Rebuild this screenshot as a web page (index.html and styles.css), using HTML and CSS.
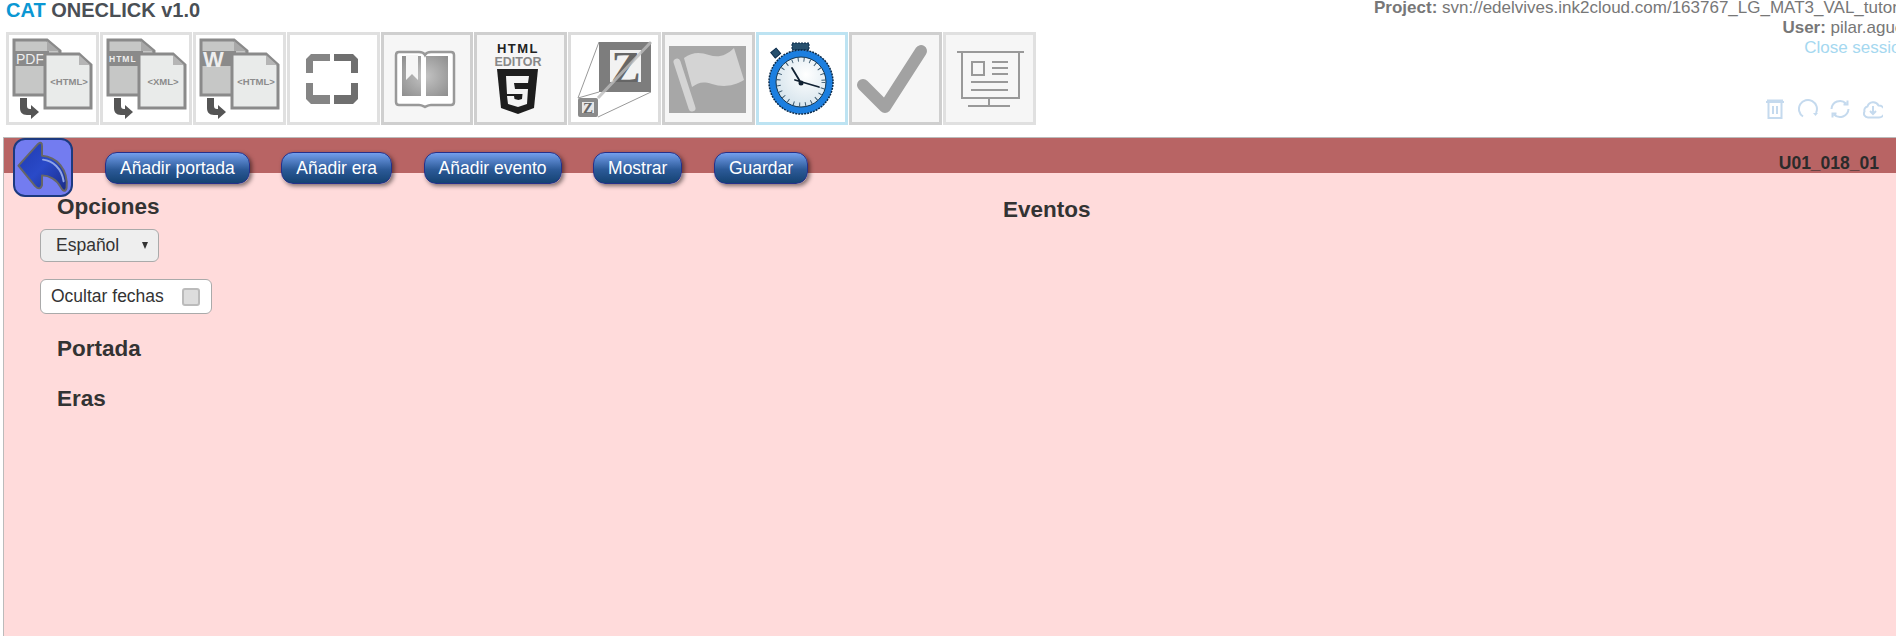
FILE: index.html
```html
<!DOCTYPE html>
<html>
<head>
    <meta charset="utf-8">
    <title>CAT OneClick</title>
    <link rel="stylesheet" href="styles.css">
</head>
<body>
    <!-- Header -->
    <div class="header">
        <div class="header-left">
            <h1 class="app-title"><span class="app-cat">CAT</span> ONECLICK v1.0</h1>
            <div class="toolbar">
                <div class="tile">
                    <svg viewBox="0 0 86 87" class="tile-icon">
                        <path d="M5 5h33l13 11v44H5z" fill="#c6c7c6" stroke="#8a8a8a" stroke-width="3"/>
                        <path d="M38 6v10h12z" fill="#a9a9a9"/>
                        <rect x="4" y="16" width="36" height="15" fill="#8a8a8a"/>
                        <text x="7" y="29" class="doc-label" font-size="14">PDF</text>
                        <path d="M36 19h34l12 11v43H36z" fill="#e9ebea" stroke="#8a8a8a" stroke-width="3"/>
                        <path d="M70 20v10h11z" fill="#b5b5b5"/>
                        <text x="60" y="50" class="doc-tag" font-size="9.500" text-anchor="middle">&lt;HTML&gt;</text>
                        <path d="M11 63h7v8c0 2 1 3 3 3h1v-4l8 7-8 7v-4h-4c-5 0-7-3-7-7z" fill="#555"/>
                    </svg>
                </div>
                <div class="tile">
                    <svg viewBox="0 0 86 87" class="tile-icon">
                        <path d="M5 5h33l13 11v44H5z" fill="#c6c7c6" stroke="#8a8a8a" stroke-width="3"/>
                        <path d="M38 6v10h12z" fill="#a9a9a9"/>
                        <rect x="4" y="16" width="36" height="15" fill="#8a8a8a"/>
                        <text x="6" y="27" class="doc-label" font-size="8.500" font-weight="700" letter-spacing="1">HTML</text>
                        <path d="M36 19h34l12 11v43H36z" fill="#e9ebea" stroke="#8a8a8a" stroke-width="3"/>
                        <path d="M70 20v10h11z" fill="#b5b5b5"/>
                        <text x="60" y="50" class="doc-tag" font-size="9.500" text-anchor="middle">&lt;XML&gt;</text>
                        <path d="M11 63h7v8c0 2 1 3 3 3h1v-4l8 7-8 7v-4h-4c-5 0-7-3-7-7z" fill="#555"/>
                    </svg>
                </div>
                <div class="tile">
                    <svg viewBox="0 0 86 87" class="tile-icon">
                        <path d="M5 5h33l13 11v44H5z" fill="#c6c7c6" stroke="#8a8a8a" stroke-width="3"/>
                        <path d="M38 6v10h12z" fill="#a9a9a9"/>
                        <rect x="4" y="16" width="36" height="15" fill="#8a8a8a"/>
                        <text x="7" y="32" class="doc-label" font-size="22" font-weight="700">W</text>
                        <path d="M36 19h34l12 11v43H36z" fill="#e9ebea" stroke="#8a8a8a" stroke-width="3"/>
                        <path d="M70 20v10h11z" fill="#b5b5b5"/>
                        <text x="60" y="50" class="doc-tag" font-size="9.500" text-anchor="middle">&lt;HTML&gt;</text>
                        <path d="M11 63h7v8c0 2 1 3 3 3h1v-4l8 7-8 7v-4h-4c-5 0-7-3-7-7z" fill="#555"/>
                    </svg>
                </div>
                <div class="tile">
                    <svg viewBox="0 0 86 87" class="tile-icon">
                        <path d="M16 24l5-5h19v7H23v12h-7zM16 48h7v12h17v9H21l-5-5z" fill="#858585"/>
                        <path d="M44 19h19l5 5v14h-7V26H44zM61 48h7v16l-5 5H44v-9h17z" fill="#6f6f6f"/>
                    </svg>
                </div>
                <div class="tile tile-shade tile-dark">
                    <svg viewBox="0 0 86 87" class="tile-icon">
                        <defs>
                            <radialGradient id="bookFill" cx="0.5" cy="0.5" r="0.7">
                                <stop offset="0" stop-color="#c4c4c4"/>
                                <stop offset="1" stop-color="#8e8e8e"/>
                            </radialGradient>
                        </defs>
                        <path d="M15 17h20c3 0 5 1 6 3 1-2 3-3 6-3h20c2 0 3 1 3 3v47c0 2-1 3-3 3H47c-3 0-4 1-6 2-2-1-3-2-6-2H15c-2 0-3-1-3-3V20c0-2 1-3 3-3z" fill="#fff" stroke="#999" stroke-width="2.500"/>
                        <path d="M18 21h19v40H18zM42 21h22v40H42z" fill="url(#bookFill)"/>
                        <path d="M22 20h12v25l-6-6-6 6z" fill="#f6f6f6"/>
                    </svg>
                </div>
                <div class="tile tile-shade tile-dark">
                    <svg viewBox="0 0 86 87" class="tile-icon">
                        <text x="41" y="18" class="html-word" text-anchor="middle">HTML</text>
                        <text x="41" y="31" class="editor-word" text-anchor="middle">EDITOR</text>
                        <path d="M20 34h41l-4 39-16 6-17-6z" fill="#1d1d1d"/>
                        <path d="M29 41h23l-1 7H37l1 6h13l-1 15-9 3-10-3-1-8h7l.5 3 4 1 3.500-1 .5-5H30z" fill="#f4f4f4"/>
                    </svg>
                </div>
                <div class="tile tile-dotted">
                    <svg viewBox="0 0 86 87" class="tile-icon">
                        <path d="M7 63L28 7M27 82L80 57M7 63L28 57" stroke="#999" stroke-width="1" fill="none"/>
                        <rect x="28" y="7" width="52" height="50" fill="#7d7d7d"/>
                        <rect x="39" y="15" width="31" height="32" fill="#f2f2f2"/>
                        <text x="55" y="47" class="zoom-letter" font-size="44" text-anchor="middle">Z</text>
                        <path d="M27 63L80 7" stroke="#bdbdbd" stroke-width="3" opacity="0.800"/>
                        <rect x="7" y="63" width="20" height="19" rx="2" fill="#8a8a8a"/>
                        <rect x="11" y="67" width="12" height="11" fill="#e6e6e6"/>
                        <text x="17" y="78" class="zoom-letter" font-size="15" text-anchor="middle">Z</text>
                    </svg>
                </div>
                <div class="tile tile-shade tile-dark">
                    <svg viewBox="0 0 86 87" class="tile-icon">
                        <rect x="4" y="11" width="77" height="67" fill="#a7a7a7"/>
                        <path d="M19 23c8-6 16-6 25-3s17 1 25-7l10 32c-12 7-22 7-32 4s-14-1-20 3z" fill="#d4d4d4"/>
                        <path d="M12 27l15 46" stroke="#d4d4d4" stroke-width="7" stroke-linecap="round"/>
                    </svg>
                </div>
                <div class="tile tile-active">
                    <svg viewBox="0 0 86 87" class="tile-icon">
                        <defs>
                            <radialGradient id="clockFace" cx="0.6" cy="0.35" r="0.7">
                                <stop offset="0" stop-color="#fff"/>
                                <stop offset="1" stop-color="#d4e3ec"/>
                            </radialGradient>
                        </defs>
                        <rect x="33" y="8" width="17" height="7" fill="#27506e" stroke="#0a2a4a" stroke-width="1" stroke-dasharray="2 1"/>
                        <rect x="13" y="15" width="7" height="7" fill="#27506e" stroke="#0a2a4a" stroke-width="1" transform="rotate(-40 16 18)"/>
                        <circle cx="42" cy="47" r="32" fill="#1c7fe0" stroke="#0a2a4a" stroke-width="1.500" stroke-dasharray="2 1"/>
                        <circle cx="42" cy="47" r="25" fill="url(#clockFace)" stroke="#16364f" stroke-width="1"/>
                        <circle cx="42" cy="47" r="22.500" fill="none" stroke="#3c5a70" stroke-width="4" stroke-dasharray="1 5"/>
                        <path d="M42 48L33 33M36 45L60 52" stroke="#123" stroke-width="1.800" stroke-linecap="round"/>
                        <circle cx="42" cy="48" r="2.500" fill="#123"/>
                    </svg>
                </div>
                <div class="tile tile-shade tile-dark">
                    <svg viewBox="0 0 86 87" class="tile-icon">
                        <path d="M11 50l22 22L69 16" fill="none" stroke="#a2a2a2" stroke-width="12" stroke-linecap="round" stroke-linejoin="round"/>
                    </svg>
                </div>
                <div class="tile tile-shade">
                    <svg viewBox="0 0 86 87" class="tile-icon" fill="none" stroke="#999" stroke-width="2">
                        <path d="M11 17h67M16 17v46h57V17M43 63v8M22 71h42"/>
                        <path d="M26 27h12v13H26zM46 27h16M46 33h16M46 39h16M25 47h37M25 55h37"/>
                    </svg>
                </div>
            </div>
        </div>
        <div class="header-right">
            <div class="info-line project-line"><b>Project:</b> svn://edelvives.ink2cloud.com/163767_LG_MAT3_VAL_tutorial</div>
            <div class="info-line"><b>User:</b> pilar.aguer</div>
            <div class="info-line"><a class="close-link">Close session</a></div>
            <div class="actions">
                <svg viewBox="0 0 20 20" class="action-icon">
                    <path d="M1 3h18M2 1.500h16M3.500 4v15h13V4M8 7v8M12 7v8"/>
                </svg>
                <svg viewBox="0 0 20 20" class="action-icon">
                    <path d="M5 17.500A9 9 0 1 1 18 14"/>
                    <path d="M15 14h5l-2.500 3z" class="action-fill"/>
                </svg>
                <svg viewBox="0 0 20 20" class="action-icon">
                    <path d="M1.500 10A8.500 8.500 0 0 1 16 4.500M18.500 10A8.500 8.500 0 0 1 4 15.500M13.500 5.500H17.500V1.500M6.500 14.500H2.500V18.500"/>
                </svg>
                <svg viewBox="0 0 20 20" class="action-icon">
                    <path d="M5 18.500a4 4 0 0 1-3.500-6 4 4 0 0 1 3-5 6 6 0 0 1 11-1 6 6 0 0 1 .5 12zM10 7v8M7 12l3 3 3-3"/>
                </svg>
                <svg viewBox="0 0 20 20" class="action-icon">
                    <path d="M3 1h14v18H3z"/>
                </svg>
            </div>
        </div>
    </div>

    <!-- Editor -->
    <div class="editor">
        <div class="editor-bar">
            <div class="back-button">
                <svg viewBox="0 0 56 56" class="back-icon">
                    <defs>
                        <linearGradient id="backFill" x1="0" y1="0" x2="1" y2="1">
                            <stop offset="0" stop-color="#1f3ab0"/>
                            <stop offset="0.5" stop-color="#2a4ac8"/>
                            <stop offset="1" stop-color="#1a2c88"/>
                        </linearGradient>
                    </defs>
                    <path d="M3 26L23 4Q27 1 27 6V16C42 17 54 30 52 49Q50 55 46 48C42 40 34 36 27 36V46Q25 52 20 47Z" fill="url(#backFill)" stroke="#666" stroke-width="2" stroke-linejoin="round"/>
                    <path d="M28 20C38 21 47 29 49 42" fill="none" stroke="#8fa4e8" stroke-width="2" stroke-linecap="round"/>
                </svg>
            </div>
            <button class="bar-button">Añadir portada</button>
            <button class="bar-button">Añadir era</button>
            <button class="bar-button">Añadir evento</button>
            <button class="bar-button">Mostrar</button>
            <button class="bar-button">Guardar</button>
            <span class="unit-name">U01_018_01</span>
        </div>
        <div class="editor-body">
            <div class="options-col">
                <h3 class="section-title first">Opciones</h3>
                <div class="lang-select">Español<span class="lang-arrow"></span></div>
                <label class="check-box">Ocultar fechas<input type="checkbox" class="fake-check"></label>
                <h3 class="section-title">Portada</h3>
                <h3 class="section-title">Eras</h3>
            </div>
            <div class="events-col">
                <h3 class="section-title">Eventos</h3>
            </div>
        </div>
    </div>
</body>
</html>
```

FILE: styles.css
```css
* {
    box-sizing: border-box;
}

html, body {
    margin: 0;
    height: 100%;
    overflow: hidden;
    background: #fff;
    font-family: "Liberation Sans", Arial, sans-serif;
    color: #333;
}

.header {
    display: flex;
    justify-content: space-between;
    height: 137px;
    overflow: hidden;
}

.header-left {
    padding-left: 6px;
}

.app-title {
    margin: 0;
    height: 32px;
    font-size: 20px;
    line-height: 20px;
    color: #4a4f55;
}

.app-cat {
    color: #0b97d3;
}

.toolbar {
    display: flex;
}

.tile {
    width: 92.700px;
    height: 93px;
    margin-right: 1px;
    border: 3px solid #e0e0e0;
    background: #fff;
}

.tile-shade {
    background: #f6f6f6;
}

.tile-dark {
    border-color: #cfcfcf;
}

.tile-dotted {
    border-color: #dcdcdc;
}

.tile-active {
    border-color: #bde3f2;
}

.tile-icon {
    display: block;
    width: 86px;
    height: 87px;
}

.doc-label {
    font-family: "Liberation Sans", sans-serif;
    fill: #eee;
}

.doc-tag {
    font-family: "Liberation Sans", sans-serif;
    font-weight: 700;
    fill: #8c8c8c;
}

.html-word {
    font-family: "Liberation Sans", sans-serif;
    font-weight: 700;
    font-size: 13px;
    letter-spacing: 1.500px;
    fill: #222;
}

.editor-word {
    font-family: "Liberation Sans", sans-serif;
    font-weight: 700;
    font-size: 12.500px;
    fill: #888;
}

.zoom-letter {
    font-family: "Liberation Serif", serif;
    font-weight: 700;
    fill: #666;
}

.header-right {
    width: 536px;
    margin-right: -14px;
    flex: none;
    text-align: right;
    font-size: 17px;
    line-height: 20px;
    margin-top: -2px;
    color: #777;
}

.info-line {
    white-space: nowrap;
    height: 20px;
}

.project-line {
    text-align: left;
}

.close-link {
    color: #a5d8f0;
}

.actions {
    display: flex;
    gap: 12.500px;
    margin-top: 41px;
    margin-left: 391px;
}

.action-icon {
    width: 20px;
    height: 20px;
    flex: none;
    fill: none;
    stroke: #c5daee;
    stroke-width: 2;
}

.action-fill {
    fill: #c5daee;
    stroke: none;
}

.editor {
    height: 499px;
    margin-left: 3px;
    border-left: 1px solid #bbb;
    border-top: 1px solid #bbb;
    background: #ffdbdb;
}

.editor-bar {
    display: flex;
    align-items: flex-start;
    height: 35px;
    padding: 14px 0 0 9px;
    background: #b86464;
    position: relative;
}

.back-button {
    position: absolute;
    left: 9px;
    top: 0;
    width: 60px;
    height: 59px;
    border: 2px solid #1c3a80;
    border-radius: 12px;
    background: #737cf0;
    z-index: 2;
}

.back-icon {
    display: block;
    width: 56px;
    height: 55px;
}

.bar-button {
    height: 32px;
    margin-right: 31.500px;
    padding: 0 14px;
    border: 1px solid #26308a;
    border-radius: 12px;
    background: linear-gradient(#739fec, #2c5a98 55%, #144272);
    box-shadow: 2px 2px 4px rgba(0, 0, 0, 0.5);
    color: #fff;
    font-family: "Liberation Sans", Arial, sans-serif;
    font-size: 17.500px;
    white-space: nowrap;
}

.bar-button:first-of-type {
    margin-left: 92px;
}

.unit-name {
    margin-left: auto;
    margin-right: 17px;
    margin-top: 1px;
    font-size: 17.500px;
    font-weight: 700;
    color: #2b2b2b;
}

.editor-body {
    display: grid;
    grid-template-columns: 982px 1fr;
}

.options-col {
    padding-left: 36px;
}

.events-col {
    padding-top: 25px;
}

.section-title {
    margin: 0 0 0 17px;
    font-size: 22.500px;
    line-height: 24px;
    font-weight: 700;
    color: #333;
}

.section-title.first {
    margin-top: 22px;
}

.lang-select {
    display: flex;
    align-items: center;
    justify-content: space-between;
    width: 119px;
    height: 33px;
    margin-top: 10px;
    padding: 0 10px 0 15px;
    border: 1px solid #aaa;
    border-radius: 6px;
    background: #eee;
    font-size: 17.500px;
}

.lang-arrow {
    width: 0;
    height: 0;
    border-left: 3.500px solid transparent;
    border-right: 3.500px solid transparent;
    border-top: 7px solid #333;
}

.check-box {
    display: flex;
    align-items: center;
    justify-content: space-between;
    width: 172px;
    height: 35px;
    margin: 17px 0 23px;
    padding: 0 11px 0 10px;
    border: 1px solid #aaa;
    border-radius: 6px;
    background: #fff;
    font-size: 17.500px;
}

.fake-check {
    appearance: none;
    width: 18px;
    height: 18px;
    margin: 0;
    border: 2px solid #bbb;
    border-radius: 3px;
    background: #ddd;
}

.check-box + .section-title {
    margin-bottom: 26px;
}
```
